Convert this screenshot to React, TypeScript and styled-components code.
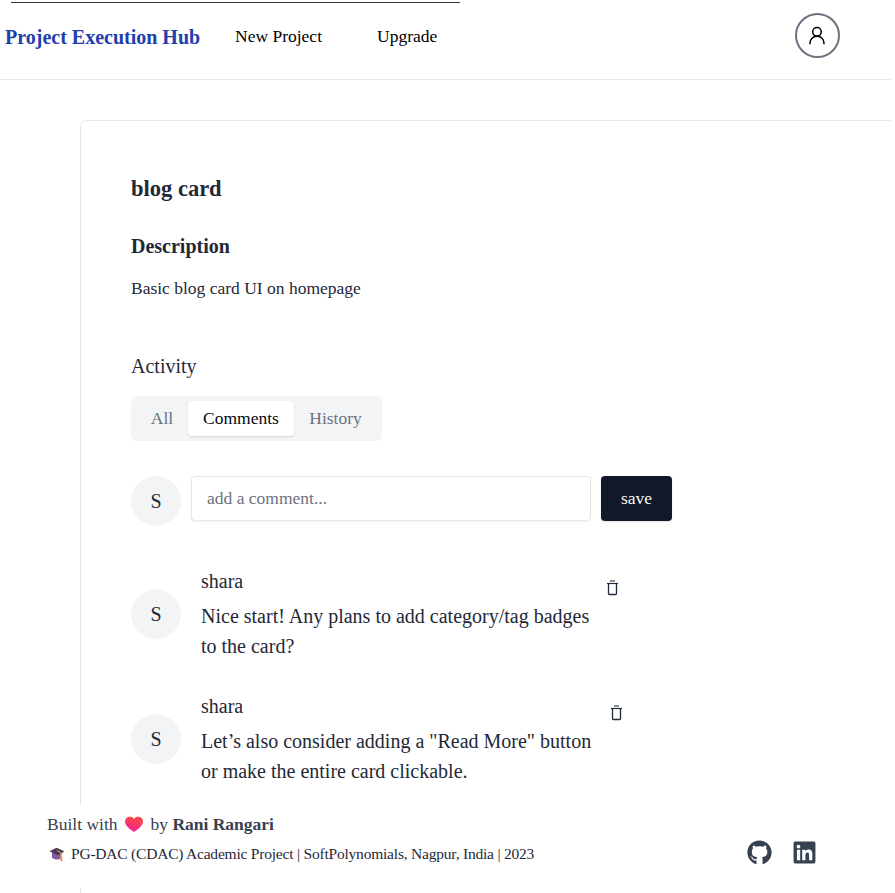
import React from "react";
import styled, { createGlobalStyle } from "styled-components";
import { FaGithub, FaLinkedin } from "react-icons/fa";

const GlobalStyle = createGlobalStyle`
  *, *::before, *::after { box-sizing: border-box; }
  body {
    margin: 0;
    background: #fff;
    color: #1f2937;
    font-family: "Liberation Serif", "Times New Roman", serif;
    overflow: hidden;
  }
  h1, h2, h3, p { margin: 0; }
  button, input { font-family: inherit; }
`;

const Page = styled.div`
  width: 891px;
  height: 893px;
  overflow: hidden;
`;

const Header = styled.header`
  position: relative;
  display: flex;
  align-items: flex-start;
  height: 80px;
  padding-left: 5px;
  border-bottom: 1px solid #e5e7eb;
`;

const TopRule = styled.div`
  position: absolute;
  top: 2px;
  left: 11px;
  width: 449px;
  height: 1px;
  background: #3a3a3e;
`;

const Brand = styled.h1`
  width: 230px;
  margin-top: 22px;
  color: #1e40af;
  font-size: 20px;
  line-height: 30px;
  white-space: nowrap;
`;

const NavLink = styled.a<{ $width: number }>`
  width: ${(p) => p.$width}px;
  margin-top: 24px;
  color: #000;
  font-size: 17.5px;
  line-height: 25px;
  white-space: nowrap;
`;

const UserButton = styled.button`
  display: flex;
  align-items: center;
  justify-content: center;
  width: 45px;
  height: 45px;
  margin: 13px 51px 0 auto;
  padding: 0;
  border: 2px solid #6b7280;
  border-radius: 50%;
  background: #fff;
  color: #000;
`;

const Card = styled.main`
  width: 900px;
  height: 900px;
  margin: 40px 0 0 80px;
  padding: 50px;
  border: 1px solid #e5e7eb;
  border-radius: 7px;
`;

const Title = styled.h2`
  margin-top: 2px;
  font-size: 22.5px;
  line-height: 32px;
`;

const Subtitle = styled.h3`
  margin-top: 26px;
  font-size: 20px;
  line-height: 30px;
`;

const Description = styled.p`
  margin-top: 15px;
  font-size: 17.5px;
  line-height: 25px;
`;

const ActivityLabel = styled.p`
  margin-top: 50px;
  font-size: 20px;
  line-height: 30px;
`;

const Tabs = styled.div`
  display: flex;
  align-items: center;
  width: 251px;
  height: 45px;
  margin-top: 15px;
  padding: 5px;
  border-radius: 6px;
  background: #f3f4f6;
`;

const Tab = styled.button<{ $active?: boolean; $width: number }>`
  width: ${(p) => p.$width}px;
  height: 35px;
  padding: 0;
  border: 0;
  border-radius: 4px;
  background: ${(p) => (p.$active ? "#fff" : "transparent")};
  box-shadow: ${(p) => (p.$active ? "0 1px 2px rgba(0, 0, 0, 0.12)" : "none")};
  color: ${(p) => (p.$active ? "#030712" : "#6b7280")};
  font-size: 17.5px;
  line-height: 25px;
`;

const Composer = styled.form`
  display: flex;
  gap: 10px;
  height: 50px;
  margin-top: 35px;
`;

const Avatar = styled.div`
  display: flex;
  flex-shrink: 0;
  align-items: center;
  justify-content: center;
  width: 50px;
  height: 50px;
  border-radius: 50%;
  background: #f3f4f6;
  font-size: 20px;
  line-height: 30px;
`;

const CommentInput = styled.input`
  width: 400px;
  height: 45px;
  padding: 0 15px;
  border: 1px solid #e5e7eb;
  border-radius: 4px;
  outline: 0;
  box-shadow: 0 1px 2px rgba(0, 0, 0, 0.06);
  font-size: 17.5px;
  &::placeholder { color: #6b7280; opacity: 1; }
`;

const SaveButton = styled.button`
  width: 71px;
  height: 45px;
  padding: 0;
  border: 0;
  border-radius: 4px;
  background: #111827;
  box-shadow: 0 1px 2px rgba(0, 0, 0, 0.12);
  color: #f9fafb;
  font-size: 17.5px;
`;

const CommentList = styled.div`
  display: flex;
  flex-direction: column;
  gap: 30px;
  margin-top: 40px;
`;

const CommentRow = styled.article`
  display: flex;
  align-items: center;
  height: 95px;
`;

const CommentBody = styled.div`
  align-self: flex-start;
  margin-left: 20px;
  font-size: 20px;
  line-height: 30px;
  white-space: nowrap;
`;

const CommentText = styled.p`
  margin-top: 5px;
`;

const DeleteButton = styled.button<{ $gap: number }>`
  display: flex;
  align-self: flex-start;
  margin: 14px 0 0 ${(p) => p.$gap}px;
  padding: 0;
  border: 0;
  background: none;
  color: #1f2937;
`;

const Footer = styled.footer`
  position: fixed;
  top: 805px;
  left: 0;
  display: flex;
  justify-content: space-between;
  width: 891px;
  height: 83px;
  padding: 5px 74px 0 47px;
  background: #fff;
  color: #374151;
  white-space: nowrap;
`;

const Credit = styled.p`
  display: flex;
  align-items: center;
  height: 29px;
  font-size: 17.5px;
  svg { margin: 0 7px 0 6px; }
`;

const Affiliation = styled.p`
  display: flex;
  align-items: center;
  height: 30px;
  padding-left: 2px;
  color: #1f2937;
  font-size: 15.5px;
  letter-spacing: -0.21px;
  svg { margin-right: 6px; }
`;

const Socials = styled.div`
  display: flex;
  gap: 20px;
  margin-top: 30px;
`;

const UserIcon = () => (
  <svg width="21" height="21" viewBox="0 0 24 24" fill="none" stroke="currentColor" strokeWidth="1.7">
    <circle cx="11.4" cy="7.8" r="4.9" />
    <path d="M3.400 22v-1.400c0-4.400 3.300-7.800 8-7.800s8 3.400 8 7.800V22" />
  </svg>
);

const TrashIcon = () => (
  <svg width="13" height="17" viewBox="0 0 13 17" fill="none" stroke="currentColor">
    <path d="M4 1h5" strokeOpacity=".75" strokeWidth="1.4" />
    <path d="M1 3.5h11" strokeWidth="1.2" />
    <path d="M2.500 3.500v10q0 1 1 1h6q1 0 1-1v-10" strokeWidth="1.3" />
  </svg>
);

const HeartIcon = () => (
  <svg width="20" height="17" viewBox="0 0 20 17">
    <defs>
      <linearGradient id="heart" x1="0.7" y1="0" x2="0.4" y2="1">
        <stop offset="0" stopColor="#fb4b49" />
        <stop offset=".5" stopColor="#fa3665" />
        <stop offset="1" stopColor="#f51fae" />
      </linearGradient>
    </defs>
    <path fill="url(#heart)" d="M10 3.2C8.7.7 6.6.8 5.2.8 2.7.8 1 3 1 5.5 1 9.5 5.6 13 10 16c4.400-3 9-6.500 9-10.500C19 3 17.300.8 14.800.8c-1.400 0-3.500-.1-4.800 2.400z" />
  </svg>
);

const CapIcon = () => (
  <svg width="16" height="15" viewBox="0 0 16 15">
    <path fill="#7c5ca3" d="M3 5h9.500v5.800c-2.300 2.500-7 2.200-9.500 0z" />
    <path fill="#493654" d="M.5 4.200 7.500.8l7.800 3.400-5.700 4z" />
    <path d="m7.800 3.400 4 2.400v5" fill="none" stroke="#efa63c" strokeWidth="1" />
    <path fill="#ed7f50" d="M11 10h2l.5 4.500-2-.8z" />
  </svg>
);

const comments = [
  { author: "shara", lines: ["Nice start! Any plans to add category/tag badges", "to the card?"], gap: 17 },
  { author: "shara", lines: ["Let’s also consider adding a \"Read More\" button", "or make the entire card clickable."], gap: 19 },
];

export default function App() {
  return (
    <Page>
      <GlobalStyle />
      <Header>
        <TopRule />
        <Brand>Project Execution Hub</Brand>
        <NavLink $width={142}>New Project</NavLink>
        <NavLink $width={70}>Upgrade</NavLink>
        <UserButton aria-label="Account"><UserIcon /></UserButton>
      </Header>
      <Card>
        <Title>blog card</Title>
        <Subtitle>Description</Subtitle>
        <Description>Basic blog card UI on homepage</Description>
        <ActivityLabel>Activity</ActivityLabel>
        <Tabs>
          <Tab $width={52}>All</Tab>
          <Tab $active $width={106}>Comments</Tab>
          <Tab $width={83}>History</Tab>
        </Tabs>
        <Composer>
          <Avatar>S</Avatar>
          <CommentInput placeholder="add a comment..." />
          <SaveButton type="button">save</SaveButton>
        </Composer>
        <CommentList>
          {comments.map((comment) => (
            <CommentRow key={comment.lines[0]}>
              <Avatar>S</Avatar>
              <CommentBody>
                <p>{comment.author}</p>
                <CommentText>{comment.lines[0]}<br />{comment.lines[1]}</CommentText>
              </CommentBody>
              <DeleteButton $gap={comment.gap} aria-label="Delete comment"><TrashIcon /></DeleteButton>
            </CommentRow>
          ))}
        </CommentList>
      </Card>
      <Footer>
        <div>
          <Credit>Built with <HeartIcon /> by&nbsp;<strong>Rani Rangari</strong></Credit>
          <Affiliation><CapIcon />PG-DAC (CDAC) Academic Project | SoftPolynomials, Nagpur, India | 2023</Affiliation>
        </div>
        <Socials>
          <FaGithub size={25} />
          <FaLinkedin size={25} />
        </Socials>
      </Footer>
    </Page>
  );
}
